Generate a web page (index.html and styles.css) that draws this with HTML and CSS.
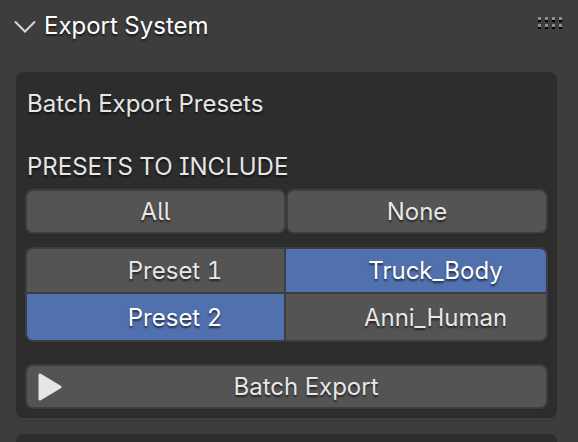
FILE: index.html
```html
<!DOCTYPE html>
<html lang="en">
<head>
<meta charset="utf-8">
<title>Export System</title>
<link rel="stylesheet" href="styles.css">
</head>
<body>
<section class="panel">
  <header class="panel-header">
    <button class="panel-toggle" type="button" aria-expanded="true">
      <svg class="chevron" viewBox="0 0 22 14" aria-hidden="true"><path d="M1.500 2 11 11.500 20.500 2"/></svg>
      <span>Export System</span>
    </button>
    <svg class="grip" viewBox="0 0 24 12" aria-hidden="true">
      <path class="grip-shade" d="M0 3h3v2H0zM7 3h3v2H7zM14 3h3v2h-3zM21 3h3v2h-3zM0 10h3v2H0zM7 10h3v2H7zM14 10h3v2h-3zM21 10h3v2h-3z"/>
      <path class="grip-dot" d="M0 0h3v3H0zM7 0h3v3H7zM14 0h3v3h-3zM21 0h3v3h-3zM0 7h3v3H0zM7 7h3v3H7zM14 7h3v3h-3zM21 7h3v3h-3z"/>
    </svg>
  </header>
  <div class="box">
    <h2 class="label">Batch Export Presets</h2>
    <h3 class="label label-include">PRESETS TO INCLUDE</h3>
    <div class="row">
      <button class="btn" type="button">All</button>
      <button class="btn" type="button">None</button>
    </div>
    <div class="presets">
      <button class="preset" type="button" aria-pressed="false">Preset 1</button>
      <button class="preset" type="button" aria-pressed="true">Truck_Body</button>
      <button class="preset" type="button" aria-pressed="true">Preset 2</button>
      <button class="preset" type="button" aria-pressed="false">Anni_Human</button>
    </div>
    <button class="btn btn-export" type="button">
      <svg class="play" viewBox="0 0 24 28" aria-hidden="true"><path d="M2 2v24L22 14z"/></svg>
      <span class="btn-text">Batch Export</span>
    </button>
  </div>
  <div class="box box-next"></div>
</section>
</body>
</html>
```
FILE: styles.css
```css
* {
  box-sizing: border-box;
}

body {
  margin: 0;
  background: #3d3d3d;
  color: #e6e6e6;
  font: 400 24px/30px Inter, sans-serif;
  font-feature-settings: "ss02", "tnum";
  text-shadow: 0 2px 2px rgba(0, 0, 0, 0.6);
}

button {
  margin: 0;
  padding: 0;
  border: 0;
  color: inherit;
  font: inherit;
  font-feature-settings: inherit;
  text-shadow: inherit;
}

.panel {
  display: flex;
  flex-direction: column;
  gap: 16px;
  padding: 0 21px 0 16px;
}

.panel-header {
  display: flex;
  align-items: center;
  justify-content: space-between;
  height: 56px;
  padding-bottom: 4px;
  margin: 0 -5px 0 -2px;
}

.panel-toggle {
  display: flex;
  align-items: center;
  gap: 8px;
  background: none;
  color: #fff;
}

.chevron {
  width: 22px;
  height: 14px;
  margin-top: 2px;
  fill: none;
  stroke: #d8d8d8;
  stroke-width: 2;
  stroke-linecap: round;
}

.grip {
  width: 24px;
  height: 12px;
  margin-top: -6px;
}

.grip-dot {
  fill: #8e8e8e;
}

.grip-shade {
  fill: #000;
}

.box {
  padding: 17px 9px 9px;
  border-radius: 7px;
  background: #2d2d2d;
  box-shadow: 0 2px #404040, 0 3px #353535;
}

.box-next {
  height: 8px;
  padding: 0;
  border-radius: 7px 7px 0 0;
  box-shadow: none;
}

.label {
  margin: 0 2px;
  font-size: 24px;
  font-weight: 400;
}

.label-include {
  margin-top: 33px;
  margin-bottom: 7px;
}

.row {
  display: grid;
  grid-template-columns: 261fr 262fr;
}

.btn {
  height: 45px;
  border: 2px solid #3d3d3d;
  border-radius: 8px;
  background: #545454;
  box-shadow: 0 1px #272727;
}

.presets {
  display: grid;
  grid-template-columns: 257fr 260fr;
  grid-template-rows: 43px 46px;
  gap: 2px;
  margin: 13px 0 22px;
  border: 2px solid #3d3d3d;
  border-radius: 8px;
  background: #3d3d3d;
  box-shadow: 0 1px #272727;
  overflow: hidden;
}

.preset {
  padding-top: 1px;
  padding-left: 39px;
  background: #545454;
}

.preset[aria-pressed="true"] {
  background: #5070ae;
  color: #fff;
}

.btn-export {
  display: flex;
  align-items: center;
  width: 100%;
  padding-left: 11px;
}

.btn-text {
  flex: 1;
  padding-left: 4px;
}

.play {
  width: 24px;
  height: 28px;
  fill: #e6e6e6;
  stroke: #e6e6e6;
  stroke-width: 3;
  stroke-linejoin: round;
}
```
